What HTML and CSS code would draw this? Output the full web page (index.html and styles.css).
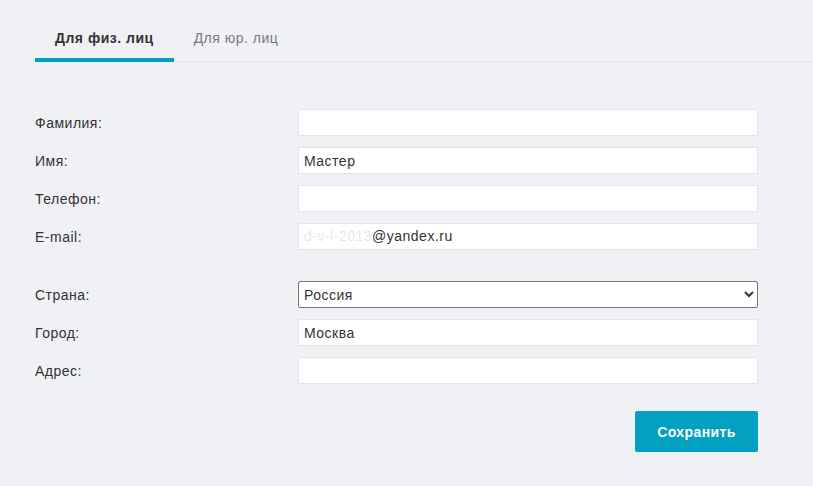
FILE: index.html
```html
<!DOCTYPE html>
<html lang="ru">
   <head>
      <meta charset="UTF-8">
      <meta name="viewport" content="width=device-width, initial-scale=1.0">
      <title>Профиль</title>
      <link rel="stylesheet" href="styles.css">
   </head>
   <body>
      <ul class="tabs">
         <li class="tab active">Для физ. лиц</li>
         <li class="tab">Для юр. лиц</li>
      </ul>
      <form class="profile-form">
         <div class="row">
            <label for="lastName">Фамилия:</label>
            <input type="text" id="lastName">
         </div>
         <div class="row">
            <label for="firstName">Имя:</label>
            <input type="text" id="firstName" value="Мастер">
         </div>
         <div class="row">
            <label for="phone">Телефон:</label>
            <input type="text" id="phone">
         </div>
         <div class="row">
            <label>E-mail:</label>
            <div class="field"><span class="hidden-part">d-v-l-2013</span>@yandex.ru</div>
         </div>
         <div class="row group-start">
            <label for="country">Страна:</label>
            <select id="country">
               <option>Россия</option>
               <option>Беларусь</option>
               <option>Казахстан</option>
            </select>
         </div>
         <div class="row">
            <label for="city">Город:</label>
            <input type="text" id="city" value="Москва">
         </div>
         <div class="row">
            <label for="address">Адрес:</label>
            <input type="text" id="address">
         </div>
         <div class="actions">
            <button type="submit" class="save-btn">Сохранить</button>
         </div>
      </form>
   </body>
</html>
```
FILE: styles.css
```css
body { margin: 0; background: #eff1f5; font-family: "Liberation Sans", Arial, sans-serif; font-size: 14px; letter-spacing: 0.5px; color: #333; }
.tabs { list-style: none; margin: 0 0 0 35px; padding: 0; display: flex; border-bottom: 1px solid #e3e5e9; }
.tab { padding: 28px 20px 10px; line-height: 20px; color: #7a7a7a; border-bottom: 4px solid transparent; margin-bottom: -1px; cursor: pointer; }
.tab.active { color: #333; font-weight: bold; border-bottom-color: #02a1c1; }
.profile-form { margin: 47px 0 0 35px; width: 723px; display: flex; flex-direction: column; gap: 11px; }
.row { display: flex; align-items: center; }
.row.group-start { margin-top: 20px; }
.row label { width: 263px; flex: none; color: #333; }
.row input,
.row .field { flex: 1; height: 27px; box-sizing: border-box; border: 1px solid #e2e5ea; background: #fff; padding: 0 5px; font: inherit; letter-spacing: inherit; color: #333; outline: none; }
.row .field { line-height: 25px; }
.hidden-part { color: #e6e8ec; }
.row select { flex: 1; height: 27px; box-sizing: border-box; border: 1px solid #767676; border-radius: 2px; background: #fff; padding: 0 1px; font: inherit; letter-spacing: inherit; color: #333; }
.actions { display: flex; justify-content: flex-end; margin-top: 16px; }
.save-btn { width: 123px; height: 41px; border: none; border-radius: 2px; background: #02a1c1; color: #fff; font: bold 14px "Liberation Sans", Arial, sans-serif; letter-spacing: 0.4px; cursor: pointer; }
.save-btn:hover { background: #0189a5; }
```
